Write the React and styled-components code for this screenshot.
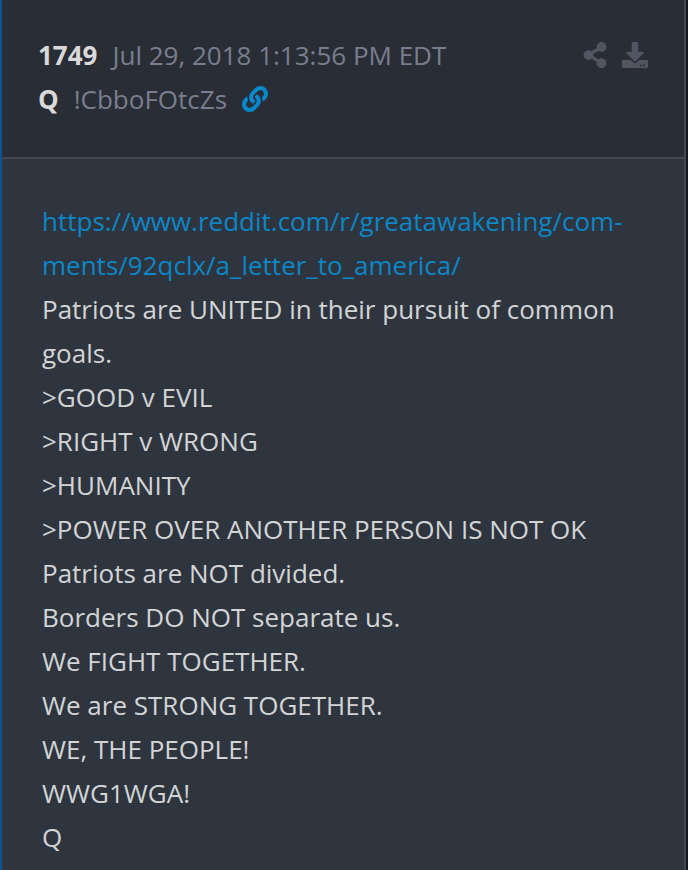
import styled, { createGlobalStyle } from "styled-components";
import { FaShareAlt, FaDownload, FaLink } from "react-icons/fa";

const GlobalStyle = createGlobalStyle`
  * {
    box-sizing: border-box;
  }

  body {
    margin: 0;
    background-color: #14161f;
    font-family: "Open Sans", "Noto Sans", sans-serif;
    font-size: 26px;
    line-height: 44px;
    color: #d3d4d6;
  }
`;

const Post = styled.article`
  min-height: 100vh;
  margin-right: 2px;
  border-left: 2px solid #0b5498;
  border-right: 2px solid #444751;
  background-color: #2f353f;
`;

const Header = styled.header`
  display: flex;
  justify-content: space-between;
  align-items: flex-start;
  padding: 33px 36px;
  padding-bottom: 36px;
  border-bottom: 2px solid #444751;
  background-color: #292d36;
`;

const MetaRow = styled.div`
  display: flex;
  align-items: center;
  gap: 15px;
  color: #7b7d8e;

  strong {
    color: #d9d9d9;
  }
`;

const Actions = styled.div`
  display: flex;
  gap: 14px;
  padding-top: 9px;
`;

const IconButton = styled.button`
  display: flex;
  padding: 0;
  border: 0;
  background: none;
  color: #525561;
  font-size: 26px;
  cursor: pointer;
`;

const IconLink = styled.a`
  display: flex;
  color: #0888cc;
`;

const Body = styled.div`
  padding: 40px 40px 10px;

  p {
    margin: 0;
  }

  a {
    color: #0b86c6;
    text-decoration: none;
  }
`;

const lines = [
  "Patriots are UNITED in their pursuit of common goals.",
  ">GOOD v EVIL",
  ">RIGHT v WRONG",
  ">HUMANITY",
  ">POWER OVER ANOTHER PERSON IS NOT OK",
  "Patriots are NOT divided.",
  "Borders DO NOT separate us.",
  "We FIGHT TOGETHER.",
  "We are STRONG TOGETHER.",
  "WE, THE PEOPLE!",
  "WWG1WGA!",
  "Q",
];

function App() {
  return (
    <>
      <GlobalStyle />
      <Post>
        <Header>
          <div>
            <MetaRow>
              <strong>1749</strong>
              <time dateTime="2018-07-29T13:13:56-04:00">
                Jul 29, 2018 1:13:56 PM EDT
              </time>
            </MetaRow>
            <MetaRow>
              <strong>Q</strong>
              <span>!CbboFOtcZs</span>
              <IconLink href="#1749" aria-label="Link to post 1749">
                <FaLink />
              </IconLink>
            </MetaRow>
          </div>
          <Actions>
            <IconButton type="button" aria-label="Share">
              <FaShareAlt />
            </IconButton>
            <IconButton type="button" aria-label="Download">
              <FaDownload />
            </IconButton>
          </Actions>
        </Header>
        <Body>
          <p>
            <a href="https://www.reddit.com/r/greatawakening/comments/92qclx/a_letter_to_america/">
              https://www.reddit.com/r/greatawakening/com-
              <br />
              ments/92qclx/a_letter_to_america/
            </a>
          </p>
          {lines.map((line) => (
            <p key={line}>{line}</p>
          ))}
        </Body>
      </Post>
    </>
  );
}

export default App;
